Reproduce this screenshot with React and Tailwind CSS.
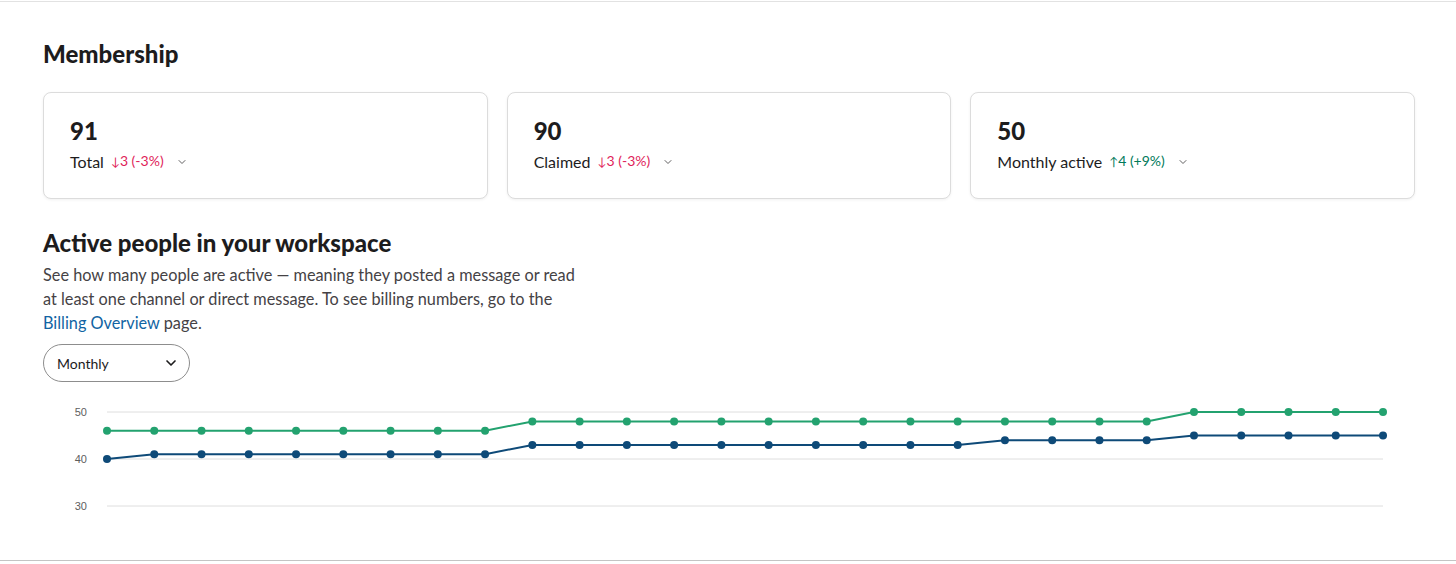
import { ChevronDown } from 'lucide-react';

const green = [46, 46, 46, 46, 46, 46, 46, 46, 46, 48, 48, 48, 48, 48, 48, 48, 48, 48, 48, 48, 48, 48, 48, 50, 50, 50, 50, 50];
const navy = [40, 41, 41, 41, 41, 41, 41, 41, 41, 43, 43, 43, 43, 43, 43, 43, 43, 43, 43, 44, 44, 44, 44, 45, 45, 45, 45, 45];

const px = (i) => 64 + i * 47.26;
const py = (v) => 12 + (50 - v) * 4.7;

function Series({ data, color }) {
	const pts = data.map((v, i) => `${px(i)},${py(v)}`).join(' ');
	return (
		<g>
			<polyline points={pts} fill="none" stroke={color} strokeWidth="2" />
			{data.map((v, i) => (
				<circle key={i} cx={px(i)} cy={py(v)} r="4" fill={color} />
			))}
		</g>
	);
}

function StatCard({ value, label, delta, up }) {
	return (
		<div className="h-[107px] rounded-lg border border-[#dcdcdc] bg-white pl-[26px] pt-[24px] shadow-[0_1px_3px_rgba(0,0,0,0.06)]">
			<div className="text-[24px] font-black leading-7 text-[#1d1c1d]">{value}</div>
			<div className="mt-[4px] flex items-center text-[16px] leading-6 text-[#1d1c1d]">
				<span>{label}</span>
				<span className={`ml-[7px] text-[14px] ${up ? 'text-[#007a5a]' : 'text-[#e01e5a]'}`}>
					<span className="text-[12px]">{up ? '↑' : '↓'}</span>{delta}
				</span>
				<ChevronDown size={12} strokeWidth={2} className="ml-[12px] text-[#616061]" />
			</div>
		</div>
	);
}

export default function App() {
	return (
		<div className="w-[1456px] h-[564px] bg-white font-['Lato','Liberation_Sans',sans-serif] overflow-hidden">
			<div className="mt-px h-[560px] border-t border-b border-t-[#e2e2e2] border-b-[#c4c4c4] px-[43px] pt-[38px]">
				<h2 className="text-[24px] font-black leading-7 text-[#1d1c1d]">Membership</h2>

				<div className="mt-6 grid w-[1372px] grid-cols-3 gap-[19px]">
					<StatCard value="91" label="Total" delta="3 (-3%)" />
					<StatCard value="90" label="Claimed" delta="3 (-3%)" />
					<StatCard value="50" label="Monthly active" delta="4 (+9%)" up />
				</div>

				<h2 className="mt-[30px] text-[24px] font-black leading-7 text-[#1d1c1d]">Active people in your workspace</h2>
				<p className="mt-[6px] w-[545px] text-[16.3px] leading-6 text-[#454245]">
					See how many people are active — meaning they posted a message or read at least one channel or direct message. To see billing numbers, go to the{' '}
					<a className="text-[#1264a3]">Billing Overview</a> page.
				</p>

				<button className="mt-[9px] flex h-[38px] w-[147px] items-center justify-between rounded-full border border-[#8d8d8d] pl-[13px] pr-[10px] text-[14px] text-[#1d1c1d]">
					<span>Monthly</span>
					<ChevronDown size={16} strokeWidth={2.5} />
				</button>

				<svg className="mt-[18px] block" width="1372" height="120">
					{[50, 40, 30].map((v) => (
						<g key={v}>
							<line x1="64" x2="1340" y1={py(v)} y2={py(v)} stroke="#dedede" strokeWidth="1" />
							<text x="44" y={py(v) + 4} textAnchor="end" fontSize="11" fill="#5e5e5e" fontFamily="Liberation Sans, Arial, sans-serif">{v}</text>
						</g>
					))}
					<Series data={green} color="#23a26f" />
					<Series data={navy} color="#0e4a78" />
				</svg>
			</div>
		</div>
	);
}
